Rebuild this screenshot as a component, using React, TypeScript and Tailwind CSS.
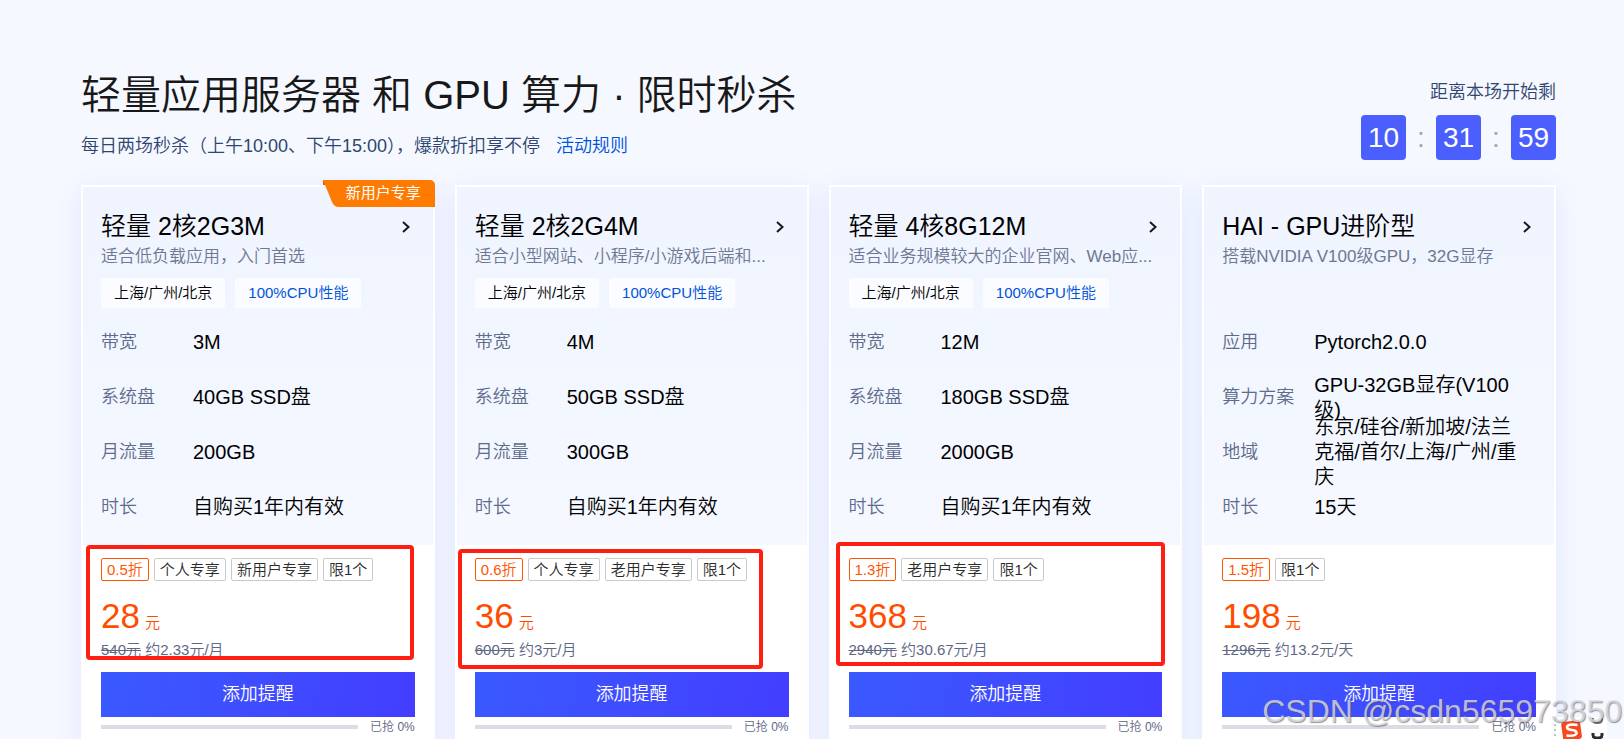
type Annotation = "first" | "second" | "third";

type Plan = {
  name: string;
  desc: string;
  ribbon?: string;
  region?: string;
  feature?: string;
  specs: { label: string; value: string }[];
  discount: string;
  limits: string[];
  price: string;
  oldPrice: string;
  average: string;
  mark?: Annotation;
};

const plans: Plan[] = [
  {
    name: "轻量 2核2G3M",
    desc: "适合低负载应用，入门首选",
    ribbon: "新用户专享",
    region: "上海/广州/北京",
    feature: "100%CPU性能",
    specs: [
      { label: "带宽", value: "3M" },
      { label: "系统盘", value: "40GB SSD盘" },
      { label: "月流量", value: "200GB" },
      { label: "时长", value: "自购买1年内有效" },
    ],
    discount: "0.5折",
    limits: ["个人专享", "新用户专享", "限1个"],
    price: "28",
    oldPrice: "540元",
    average: "约2.33元/月",
    mark: "first",
  },
  {
    name: "轻量 2核2G4M",
    desc: "适合小型网站、小程序/小游戏后端和...",
    region: "上海/广州/北京",
    feature: "100%CPU性能",
    specs: [
      { label: "带宽", value: "4M" },
      { label: "系统盘", value: "50GB SSD盘" },
      { label: "月流量", value: "300GB" },
      { label: "时长", value: "自购买1年内有效" },
    ],
    discount: "0.6折",
    limits: ["个人专享", "老用户专享", "限1个"],
    price: "36",
    oldPrice: "600元",
    average: "约3元/月",
    mark: "second",
  },
  {
    name: "轻量 4核8G12M",
    desc: "适合业务规模较大的企业官网、Web应...",
    region: "上海/广州/北京",
    feature: "100%CPU性能",
    specs: [
      { label: "带宽", value: "12M" },
      { label: "系统盘", value: "180GB SSD盘" },
      { label: "月流量", value: "2000GB" },
      { label: "时长", value: "自购买1年内有效" },
    ],
    discount: "1.3折",
    limits: ["老用户专享", "限1个"],
    price: "368",
    oldPrice: "2940元",
    average: "约30.67元/月",
    mark: "third",
  },
  {
    name: "HAI - GPU进阶型",
    desc: "搭载NVIDIA V100级GPU，32G显存",
    specs: [
      { label: "应用", value: "Pytorch2.0.0" },
      { label: "算力方案", value: "GPU-32GB显存(V100级)" },
      { label: "地域", value: "东京/硅谷/新加坡/法兰克福/首尔/上海/广州/重庆" },
      { label: "时长", value: "15天" },
    ],
    discount: "1.5折",
    limits: ["限1个"],
    price: "198",
    oldPrice: "1296元",
    average: "约13.2元/天",
  },
];

const countdown = ["10", "31", "59"];

const markClass: Record<Annotation, string> = {
  first: "left-[3px] top-0 w-[328px] h-[115px]",
  second: "left-px top-1 w-[305px] h-[120px]",
  third: "left-[5px] -top-[3px] w-[329px] h-[124px]",
};

function Ribbon({ text }: { text: string }) {
  return (
    <div className="absolute -top-[7px] -right-[2px] w-[112px] h-[27px]">
      <svg className="absolute inset-0" width="112" height="27" viewBox="0 0 112 27">
        <path d="M0 0H107a5 5 0 0 1 5 5V27H16q-5 0-7-5L2 5H0Z" fill="#ff7a00" />
        <path d="M0 0L2 5H0Z" fill="#d96200" />
      </svg>
      <span className="relative block pl-[23px] text-[15px] leading-[26px] font-normal text-white whitespace-nowrap">{text}</span>
    </div>
  );
}

function PlanCard({ plan }: { plan: Plan }) {
  return (
    <article className="relative min-w-0 bg-white border-2 border-white shadow-[0_5px_25px_rgba(54,88,255,0.1)]">
      {plan.ribbon && <Ribbon text={plan.ribbon} />}

      {/* Spec area */}
      <div className="h-[358px] px-[18px] pt-6 bg-linear-to-b from-[#eff4ff] to-[#f5f8ff]">
        <a href="#" className="flex items-center justify-between h-[31px] pr-[3px] text-black">
          <h2 className="text-[25px] leading-[31px] whitespace-nowrap">{plan.name}</h2>
          <svg width="12" height="14" viewBox="0 0 12 14" fill="none" stroke="#181818" strokeWidth="2">
            <path d="M3 2L8.500 7L3 12" />
          </svg>
        </a>
        <p className="h-[30px] text-[17px] leading-[30px] text-[#6e7892] whitespace-nowrap overflow-hidden">{plan.desc}</p>
        <div className="flex gap-[10px] h-[30px] mt-[6px]">
          {plan.region && (
            <span className="px-[13px] rounded-xs bg-[#fafcff] text-[15px] leading-[30px] text-black">{plan.region}</span>
          )}
          {plan.feature && (
            <span className="px-[13px] rounded-xs bg-[#fafcff] text-[15px] leading-[30px] text-[#0052d9]">{plan.feature}</span>
          )}
        </div>
        <dl className="mt-[7px]">
          {plan.specs.map((s) => (
            <div key={s.label} className="flex items-center h-[55px]">
              <dt className="w-[92px] shrink-0 text-[18px] leading-[25px] text-[#5e6b8c]">{s.label}</dt>
              <dd className="flex-1 pr-3 text-[20px] leading-[25px] text-black">{s.value}</dd>
            </div>
          ))}
        </dl>
      </div>

      {/* Price area */}
      <div className="relative px-[18px] pt-[13px] pb-5">
        <div className="flex gap-[5px] text-[15px] leading-[21px] whitespace-nowrap">
          <span className="px-[5px] border border-[#ff5500] rounded-xs text-[#ff5500]">{plan.discount}</span>
          {plan.limits.map((l) => (
            <span key={l} className="px-[5px] border border-[#c8cacd] rounded-xs text-[#2b2b2b]">{l}</span>
          ))}
        </div>
        <p className="flex items-baseline gap-[5px] h-10 mt-[15px] text-[#ff4d00]">
          <span className="text-[35px] leading-10">{plan.price}</span>
          <span className="text-[15px] leading-5">元</span>
        </p>
        <p className="mt-1 text-[15px] leading-5 text-[#5e6784]">
          <del>{plan.oldPrice}</del> {plan.average}
        </p>
        <button
          type="button"
          className="block w-full h-[45px] mt-3 bg-linear-100 from-[#3a59ff] to-[#433dff] text-[18px] text-white"
        >
          添加提醒
        </button>
        <div className="flex items-center gap-3 h-5 text-[12px] text-[#5e6784]">
          <div className="flex-1 h-1 bg-[#dadde3]" />
          <span>已抢 0%</span>
        </div>
        {plan.mark && (
          <div className={`absolute border-4 border-[#ff1e12] rounded-sm pointer-events-none ${markClass[plan.mark]}`} />
        )}
      </div>
    </article>
  );
}

export default function App() {
  return (
    <main
      lang="zh-CN"
      className="relative h-screen overflow-hidden bg-[#f5f8ff] pl-[81px] pr-[68px] pt-[70px] font-[350] font-['Liberation_Sans','Noto_Sans_CJK_SC',sans-serif]"
    >
      <header className="flex justify-between">
        <div>
          <h1 className="text-[40px] leading-[50px] text-[#181818] whitespace-nowrap">轻量应用服务器 和 GPU 算力 · 限时秒杀</h1>
          <p className="mt-3 text-[18px] leading-7 text-[#2f4570] whitespace-nowrap">
            每日两场秒杀（上午10:00、下午15:00），爆款折扣享不停
            <a href="#" className="ml-4 text-[#0052d9]">活动规则</a>
          </p>
        </div>
        <div className="flex flex-col items-end">
          <p className="mt-2 text-[18px] leading-7 text-[#2f4570]">距离本场开始剩</p>
          <div className="flex mt-[9px] text-[28px] leading-[45px]">
            {countdown.map((n, i) => (
              <div key={n} className="flex">
                {i > 0 && <span className="w-[30px] text-center text-[#9ba5b7]">:</span>}
                <span className="w-[45px] h-[45px] rounded-sm bg-[#4b5fff] text-center text-white">{n}</span>
              </div>
            ))}
          </div>
        </div>
      </header>

      <section className="grid grid-cols-4 gap-5 mt-[25px]">
        {plans.map((p) => (
          <PlanCard key={p.name} plan={p} />
        ))}
      </section>

      {/* Input method bar */}
      <div className="absolute right-[17px] bottom-0 w-[54px] h-[22px] bg-white">
        <svg width="54" height="22" viewBox="0 0 54 22">
          <path d="M2 2V22" stroke="#bfc3cb" strokeWidth="2" strokeDasharray="2 3" />
          <rect x="9" y="4" width="19" height="19" rx="3" fill="#f6491f" transform="rotate(-8 19 13)" />
          <path d="M24.500 8Q14.500 6.500 14 10Q14 12.500 19 13Q24 13.500 23.500 16.500Q22 19.500 13.500 18.500" fill="none" stroke="#fff" strokeWidth="2.600" />
          <path d="M40 1Q39 6 44.500 6Q50 6 49 1" fill="none" stroke="#6d7077" strokeWidth="2" />
          <path d="M40 16V18Q40 21 44.500 21Q49 21 49 18V16" fill="none" stroke="#2a2a33" strokeWidth="3" />
        </svg>
      </div>

      <p className="absolute right-[2px] bottom-[10px] text-[32px] leading-9 font-normal text-[#dcdde3]/80 [text-shadow:1px_1px_1px_rgba(80,80,90,0.6)]">
        CSDN @csdn565973850
      </p>
    </main>
  );
}
